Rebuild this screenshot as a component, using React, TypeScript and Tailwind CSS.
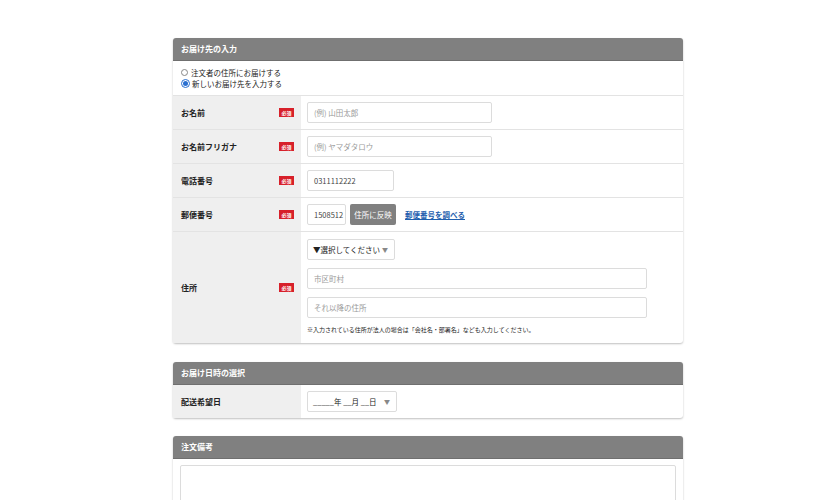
const jp = { fontFamily: '"Noto Sans CJK JP", "Noto Sans", sans-serif' };

function Required() {
  return (
    <span className="ml-auto flex h-[9px] w-[15px] items-center justify-center bg-[#d7202a] text-[5px] leading-none font-bold text-white">
      必須
    </span>
  );
}

function Row({ label, children, tall }: { label: string; children: React.ReactNode; tall?: boolean }) {
  return (
    <div className="flex border-t border-[#e3e3e3]">
      <div className={`flex w-[128px] shrink-0 items-center bg-[#efefef] pr-[7px] pl-[8px] ${tall ? "" : "h-[33px]"}`}>
        <span className="text-[8px] font-bold text-[#222]">{label}</span>
        <Required />
      </div>
      <div className="flex flex-1 flex-col justify-center pl-[6px]">{children}</div>
    </div>
  );
}

function Header({ title }: { title: string }) {
  return (
    <div className="flex h-[23px] items-center rounded-t-[3px] border-b border-[#6f6f6f] bg-[#808080] pl-[8px] text-[8px] font-bold text-white">
      {title}
    </div>
  );
}

function Input({ text, width, dark }: { text: string; width: string; dark?: boolean }) {
  return (
    <div className={`flex h-[21px] items-center rounded-[2px] border border-[#dcdcdc] bg-white pl-[6px] text-[7.5px] ${dark ? "text-[#444]" : "text-[#9a9a9a]"} ${width}`}>
      {text}
    </div>
  );
}

export default function App() {
  return (
    <div className="min-h-[500px] bg-white pt-[38px]" style={jp}>
      <div className="ml-[173px] w-[510px]">
        <div className="rounded-[3px] bg-white shadow-[0_1px_2px_rgba(0,0,0,0.25)]">
          <Header title="お届け先の入力" />
          <div className="flex h-[34px] flex-col justify-center pl-[8px] text-[7.5px] leading-[11px] text-[#222]">
            <label className="flex items-center gap-[3px]">
              <span className="inline-block h-[7px] w-[7px] rounded-full border border-[#888] bg-white" />
              注文者の住所にお届けする
            </label>
            <label className="flex items-center gap-[2px]">
              <span className="flex h-[9px] w-[9px] items-center justify-center rounded-full border border-[#2a6fd0] bg-white">
                <span className="h-[5px] w-[5px] rounded-full bg-[#2a6fd0]" />
              </span>
              新しいお届け先を入力する
            </label>
          </div>
          <Row label="お名前">
            <Input text="(例) 山田太郎" width="w-[185px]" />
          </Row>
          <Row label="お名前フリガナ">
            <Input text="(例) ヤマダタロウ" width="w-[185px]" />
          </Row>
          <Row label="電話番号">
            <Input text="0311112222" width="w-[87px]" dark />
          </Row>
          <Row label="郵便番号">
            <div className="flex items-center">
              <Input text="1508512" width="w-[39px]" dark />
              <button className="ml-[4px] flex h-[21px] w-[46px] items-center justify-center rounded-[2px] bg-[#808080] text-[7.5px] text-white">
                住所に反映
              </button>
              <a className="ml-[9px] text-[7.5px] font-bold text-[#1f5fae] underline">郵便番号を調べる</a>
            </div>
          </Row>
          <div className="flex border-t border-[#e3e3e3]">
            <div className="flex w-[128px] shrink-0 items-center bg-[#efefef] pr-[7px] pl-[8px]">
              <span className="text-[8px] font-bold text-[#222]">住所</span>
              <Required />
            </div>
            <div className="flex flex-1 flex-col gap-[8px] pt-[7px] pb-[9px] pl-[6px]">
              <div className="flex h-[21px] w-[88px] items-center justify-between rounded-[2px] border border-[#dcdcdc] pr-[6px] pl-[5px] text-[7.5px] whitespace-nowrap text-[#222]">
                <span>▼選択してください</span>
                <span className="text-[6px] text-[#888]">▼</span>
              </div>
              <Input text="市区町村" width="w-[340px]" />
              <Input text="それ以降の住所" width="w-[340px]" />
              <p className="text-[6px] leading-[8px] text-[#222]">
                ※入力されている住所が法人の場合は「会社名・部署名」なども入力してください。
              </p>
            </div>
          </div>
        </div>

        <div className="mt-[19px] rounded-[3px] bg-white shadow-[0_1px_2px_rgba(0,0,0,0.25)]">
          <Header title="お届け日時の選択" />
          <div className="flex">
            <div className="flex h-[33px] w-[128px] shrink-0 items-center bg-[#efefef] pl-[8px]">
              <span className="text-[8px] font-bold text-[#222]">配送希望日</span>
            </div>
            <div className="flex flex-1 items-center pl-[6px]">
              <div className="flex h-[21px] w-[90px] items-center justify-between rounded-[2px] border border-[#dcdcdc] pr-[6px] pl-[5px] text-[7.5px] text-[#222]">
                <span>_____年 __月 __日</span>
                <span className="text-[6px] text-[#888]">▼</span>
              </div>
            </div>
          </div>
        </div>

        <div className="mt-[18px] rounded-[3px] bg-white shadow-[0_1px_2px_rgba(0,0,0,0.25)]">
          <Header title="注文備考" />
          <div className="px-[7px] pt-[6px]">
            <div className="h-[80px] rounded-[2px] border border-[#dcdcdc] bg-white" />
          </div>
        </div>
      </div>
    </div>
  );
}
